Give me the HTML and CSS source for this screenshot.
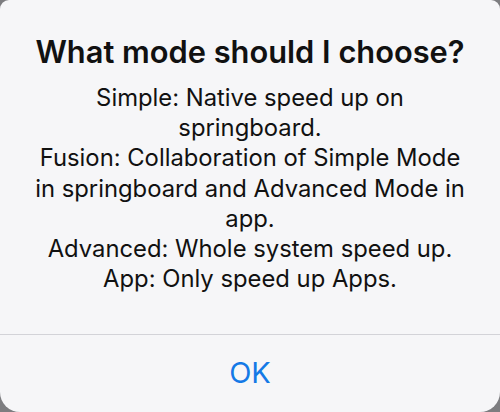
FILE: index.html
```html
<!DOCTYPE html>
<html>
<head>
<meta charset="utf-8">
<link rel="stylesheet" href="styles.css">
</head>
<body>
<div class="alert">
  <div class="content">
    <h1 class="title">What mode should I choose?</h1>
    <p class="message">Simple: Native speed up on<br>springboard.<br>Fusion: Collaboration of Simple Mode<br>in springboard and Advanced Mode in<br>app.<br>Advanced: Whole system speed up.<br>App: Only speed up Apps.</p>
  </div>
  <div class="actions">
    <button class="action">OK</button>
  </div>
</div>
</body>
</html>
```
FILE: styles.css
```css
html, body {
  margin: 0;
  padding: 0;
}
body {
  width: 500px;
  height: 412px;
  background: #7d7d80;
  overflow: hidden;
  font-family: Inter, "Noto Sans", sans-serif;
}
.alert {
  width: 500px;
  height: 412px;
  background: #f6f6f8;
  border-radius: 9px 9px 20px 20px;
  display: flex;
  flex-direction: column;
}
.content {
  padding: 33px 10px 40px;
  text-align: center;
  color: #111;
}
.title {
  margin: 0;
  font-size: 30.8px;
  line-height: 37px;
  font-weight: 600;
}
.message {
  margin: 13px 0 0;
  font-size: 23.8px;
  line-height: 30.2px;
  font-weight: 400;
}
.actions {
  flex: 1;
  border-top: 1px solid #d3d3d8;
  display: flex;
}
.action {
  flex: 1;
  border: 0;
  background: transparent;
  color: #1479e6;
  font-family: inherit;
  font-size: 29px;
  padding: 0 0 2px;
}
```
